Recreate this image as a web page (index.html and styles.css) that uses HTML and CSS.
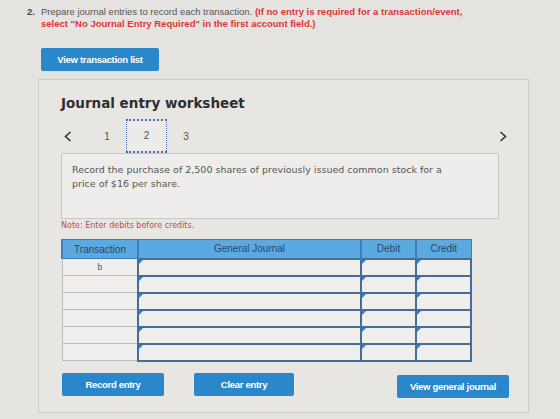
FILE: index.html
```html
<!DOCTYPE html>
<html lang="en">
<head>
  <meta charset="UTF-8" />
  <meta name="viewport" content="width=device-width, initial-scale=1.0"/>
  <title>Journal entry worksheet</title>
  <link rel="stylesheet" href="styles.css">
</head>
<body>

<div class="question">
  <span class="q-num">2.</span>
  <p class="q-text"><span>Prepare journal entries to record each transaction.</span> <strong class="q-hint">(If no entry is required for a transaction/event, select "No Journal Entry Required" in the first account field.)</strong></p>
</div>

<button class="btn btn-list">View transaction list</button>

<div class="worksheet">
  <h2>Journal entry worksheet</h2>

  <div class="pager">
    <span class="arrow">
      <svg width="8" height="11" viewBox="0 0 8 11"><path d="M6.5 1 L1.5 5.5 L6.5 10" fill="none" stroke="#333" stroke-width="1.6"/></svg>
    </span>
    <span class="page first">1</span>
    <span class="page current">2</span>
    <span class="page">3</span>
    <span class="arrow next">
      <svg width="8" height="11" viewBox="0 0 8 11"><path d="M1.5 1 L6.5 5.5 L1.5 10" fill="none" stroke="#333" stroke-width="1.6"/></svg>
    </span>
  </div>

  <div class="desc">
    <p>Record the purchase of 2,500 shares of previously issued common stock for a price of $16 per share.</p>
  </div>

  <p class="note">Note: Enter debits before credits.</p>

  <table class="journal">
    <thead>
      <tr>
        <th class="c-trans">Transaction</th>
        <th class="c-acct">General Journal</th>
        <th class="c-amt">Debit</th>
        <th class="c-amt">Credit</th>
      </tr>
    </thead>
    <tbody id="rows"></tbody>
  </table>

  <div class="actions">
    <button class="btn">Record entry</button>
    <button class="btn btn-clear">Clear entry</button>
    <button class="btn btn-view">View general journal</button>
  </div>
</div>

<script>
  // six empty entry lines, first one labelled with the transaction letter
  const body = document.getElementById("rows");
  for (let i = 0; i < 6; i++) {
    const tr = document.createElement("tr");
    tr.innerHTML =
      '<td class="trans">' + (i === 0 ? "b" : "") + '</td>' +
      '<td class="field"></td><td class="field"></td><td class="field"></td>';
    body.appendChild(tr);
  }
</script>

</body>
</html>
```

FILE: styles.css
```css
* { box-sizing: border-box; margin: 0; padding: 0; }
body {
  background: #e5e3e0;
  font-family: "Liberation Sans", Arial, sans-serif;
  color: #444;
  padding: 6px 0 0 27px;
  width: 560px;
  height: 419px;
  overflow: hidden;
}

.question { display: flex; font-size: 9.5px; line-height: 12px; }
.q-num { font-weight: bold; width: 14px; color: #444; }
.q-text { width: 432px; color: #555; }
.q-hint { color: #d9383a; }

.btn {
  background: #2a87c9;
  color: #fff;
  border: none;
  border-radius: 2px;
  font-family: "Liberation Sans", Arial, sans-serif;
  font-size: 9.5px;
  font-weight: bold;
  letter-spacing: -0.3px;
  height: 23px;
}
.btn-list { width: 118px; margin: 18px 0 0 14px; display: block; }

.worksheet {
  margin: 8px 0 0 11px;
  width: 491px;
  height: 334px;
  border: 1px solid #cfcdca;
  background: #e8e6e3;
  padding: 15px 24px 0 22px;
}
.worksheet h2 {
  font-family: "DejaVu Sans", Verdana, sans-serif;
  font-size: 13.5px;
  line-height: 17px;
  color: #2e2e2e;
}

.pager {
  display: flex;
  align-items: center;
  height: 34px;
  margin-top: 7px;
  font-size: 10px;
  color: #555;
}
.arrow { display: flex; width: 8px; margin-left: 3px; }
.arrow.next { margin-left: auto; margin-right: -3px; }
.page { width: 38px; text-align: center; }
.page.first { margin-left: 16px; }
.page.current {
  width: 41px;
  height: 34px;
  line-height: 30px;
  border: 1px dotted #4a6fa5;
  border-width: 2px 1px;
  background: #ecebe9;
}

.desc {
  width: 438px;
  height: 66px;
  border: 1px solid #c9c7c4;
  background: #eeedeb;
  padding: 9px 10px;
  font-family: "DejaVu Sans", Verdana, sans-serif;
  font-size: 9.5px;
  line-height: 14px;
  color: #555;
}
.desc p { max-width: 390px; }

.note {
  margin-top: 1px;
  font-family: "DejaVu Sans", Verdana, sans-serif;
  font-size: 8px;
  line-height: 12px;
  color: #c8474a;
}

.journal {
  margin-top: 7px;
  width: 410px;
  border-collapse: collapse;
  table-layout: fixed;
}
.journal th {
  background: #5aa9e1;
  height: 19px;
  font-size: 10px;
  font-weight: normal;
  color: #2b4864;
  border: 1px solid #3d7fb9;
  border-left-width: 2px;
}
.c-trans { width: 76px; }
.c-acct { width: 223px; }
.c-amt { width: 55px; }
.journal td { height: 17px; background: #efeeec; }
.trans {
  border: 1px solid #bdbcba;
  text-align: center;
  font-size: 8.5px;
  color: #555;
}
.field {
  border: 2px solid #466c98;
  position: relative;
}
/* little marker on each input cell */
.field::before {
  content: "";
  position: absolute;
  top: 0;
  left: 0;
  border-top: 4px solid #2b7fd0;
  border-right: 4px solid transparent;
}

.actions {
  display: flex;
  align-items: flex-start;
  margin-top: 11px;
  margin-left: 1px;
}
.actions .btn { width: 102px; height: 23px; }
.actions .btn-clear { width: 100px; margin-left: 30px; }
.actions .btn-view { width: 112px; margin-left: auto; margin-top: 2px; margin-right: -5px; }
```
